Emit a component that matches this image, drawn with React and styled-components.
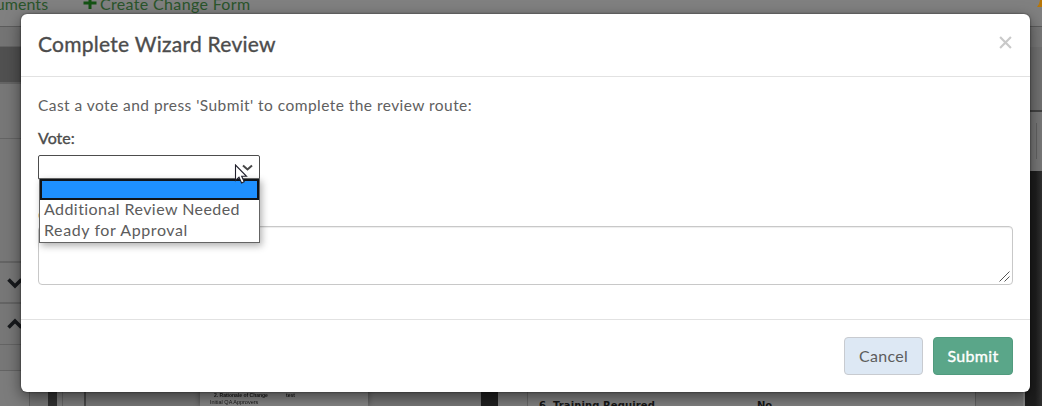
import React from "react";
import styled, { createGlobalStyle } from "styled-components";

const Global = createGlobalStyle`
  * { box-sizing: border-box; }
  body { margin: 0; overflow: hidden; font-family: Lato, "Liberation Sans", sans-serif; font-size: 16px; color: #55585b; }
`;

const Screen = styled.div`
  position: relative;
  width: 1042px;
  height: 406px;
  overflow: hidden;
  background: #757575;
  display: flex;
  flex-direction: column;
`;
const TopBar = styled.div`
  height: 27px;
  flex: none;
  background: #808080;
  border-bottom: 1px solid #5c5c5c;
  box-shadow: 0 1px 3px rgba(0, 0, 0, 0.2);
  color: #2a552b;
  display: flex;
  justify-content: space-between;
  align-items: flex-start;
`;
const Links = styled.div`
  display: flex;
  align-items: flex-start;
  height: 20px;
  line-height: 20px;
  margin-top: -6px;
  white-space: nowrap;
`;
const CutLink = styled.div`
  width: 83px;
  display: flex;
  span { margin-left: -12px; letter-spacing: 0.07px; }
`;
const CreateLink = styled.div`
  display: flex;
  align-items: flex-start;
  gap: 3px;
  letter-spacing: 0.34px;
  svg { margin-top: 2px; }
`;
const Workspace = styled.div`
  flex: 1;
  display: flex;
`;
const Sidebar = styled.div`
  width: 48px;
  display: flex;
  flex-direction: column;
`;
const SideRow = styled.div`
  height: ${(p) => p.$h}px;
  flex: none;
  background: ${(p) => p.$bg || "#777"};
  border-bottom: ${(p) => p.$line || 1}px solid #646464;
  display: flex;
  align-items: center;
  padding-left: 7px;
`;
const SideEnd = styled.div`
  flex: 1;
  width: 30px;
  background: #7c7c7c;
  border-right: 1px solid #606060;
`;
const Strip = styled.div`
  width: ${(p) => p.$w}px;
  flex: none;
  background: ${(p) => p.$bg};
`;
const Preview = styled.div`
  width: 395px;
  background: #777;
  display: flex;
  align-items: flex-end;
  padding-left: 114px;
`;
const Thumb = styled.div`
  width: 168px;
  height: 30px;
  background: #858585;
  box-shadow: 0 0 6px rgba(0, 0, 0, 0.4);
  color: #161616;
  font: 5.5px/7px "Liberation Sans", sans-serif;
  padding: 16px 10px 0;
  filter: blur(0.35px);
`;
const ThumbLine = styled.div`
  display: flex;
  font-weight: bold;
  font-size: 5px;
  padding-left: 4px;
  white-space: nowrap;
  span { width: 72px; }
`;
const DocPage = styled.div`
  flex: 1;
  background: #808080;
  border-left: 1px solid #676767;
  display: flex;
  align-items: flex-end;
`;
const DocLine = styled.div`
  height: 6px;
  display: flex;
  font: bold 10px/12px "DejaVu Sans", sans-serif;
  color: #151515;
  padding-left: 11px;
  white-space: nowrap;
  span:first-child { width: 14px; }
  span:nth-child(2) { width: 204px; letter-spacing: 0.1px; }
`;
const RightRail = styled.div`
  width: 36px;
  display: flex;
  flex-direction: column;
`;
const RailBlock = styled.div`
  height: ${(p) => p.$h}px;
  background: ${(p) => p.$bg};
  border-bottom: ${(p) => p.$line}px solid #434343;
`;
const RailTools = styled.div`
  height: 59px;
  background: #787878;
  padding: 11px 5px 12px 30px;
  display: flex;
  div { width: 1px; background: #626262; }
`;
const RailDark = styled.div`
  flex: 1;
  display: flex;
  background: #777;
  padding-left: 17px;
  div { flex: 1; background: linear-gradient(90deg, #1d1d1d 60%, #303030); border-left: 2px solid #858585; }
`;

const Modal = styled.div`
  position: absolute;
  left: 21px;
  top: 14px;
  width: 1009px;
  height: 378px;
  background: #fff;
  border-radius: 6px;
  box-shadow: 0 5px 15px rgba(0, 0, 0, 0.5), 0 0 2px rgba(0, 0, 0, 0.65);
  display: flex;
  flex-direction: column;
`;
const Header = styled.div`
  height: 63px;
  flex: none;
  border-bottom: 1px solid #e2e2e2;
  display: flex;
  justify-content: space-between;
  align-items: center;
  padding: 0 18px 0 17px;
`;
const Title = styled.div`
  font-size: 21px;
  line-height: 24px;
  margin-bottom: 2px;
  letter-spacing: 0.26px;
  color: #4c4c4c;
  -webkit-text-stroke: 0.35px #4c4c4c;
`;
const Body = styled.div`
  flex: 1;
  padding: 17px 17px 0;
`;
const Intro = styled.div`
  font-size: 15.5px;
  line-height: 22px;
  letter-spacing: 0.45px;
  color: #606060;
`;
const Label = styled.div`
  margin-top: 11px;
  line-height: 22px;
  font-size: 16px;
  color: #4c4c4c;
  -webkit-text-stroke: 0.35px #4c4c4c;
`;
const Field = styled.div`
  position: relative;
  margin-top: 6px;
  width: 222px;
  height: 49px;
`;
const Select = styled.div`
  height: 25px;
  border: 1px solid #4d4d4d;
  border-radius: 2px;
  background: #fff;
  display: flex;
  justify-content: flex-end;
  padding: 8px 6px 0;
`;
const Menu = styled.div`
  position: absolute;
  left: 1px;
  top: 23px;
  width: 221px;
  height: 65px;
  background: #fff;
  border: 1px solid #646464;
  box-shadow: 2px 3px 7px rgba(0, 0, 0, 0.3);
  z-index: 2;
`;
const Option = styled.div`
  height: 21px;
  line-height: 18px;
  padding-left: 4px;
  letter-spacing: ${(p) => p.$ls || 0}px;
  white-space: nowrap;
  color: #5c5c5c;
`;
const Selected = styled.div`
  height: 21px;
  background: #1e90ff;
  border: 2px solid #101419;
`;
const Pointer = styled.svg`
  position: absolute;
  left: 196px;
  top: 9px;
  z-index: 3;
`;
const CommentLabel = styled.div`
  height: 22px;
  line-height: 22px;
  color: #4c4c4c;
`;
const Comment = styled.div`
  height: 59px;
  border: 1px solid #c8c8c8;
  border-radius: 4px;
  box-shadow: inset 0 1px 1px rgba(0, 0, 0, 0.075);
  display: flex;
  justify-content: flex-end;
  align-items: flex-end;
  padding: 2px;
`;
const Footer = styled.div`
  height: 73px;
  flex: none;
  border-top: 1px solid #e2e2e2;
  display: flex;
  justify-content: flex-end;
  gap: 10px;
  padding: 17px 17px 0;
`;
const Button = styled.button`
  width: ${(p) => (p.$primary ? 80 : 79)}px;
  height: 38px;
  padding: 0;
  border-radius: 4px;
  font: 16px/22px Lato, sans-serif;
  letter-spacing: ${(p) => (p.$primary ? 0.3 : 0.3)}px;
  color: ${(p) => (p.$primary ? "#fff" : "#5c5c5c")};
  background: ${(p) => (p.$primary ? "#5aa689" : "#dde8f4")};
  border: 1px solid ${(p) => (p.$primary ? "#519b7e" : "#c8cbd0")};
  -webkit-text-stroke: ${(p) => (p.$primary ? "0.35px #fff" : "0")};
`;

const Chevron = ({ up }) => (
  <svg width="17" height="12" viewBox="0 0 17 12">
    <path d={up ? "M1.5 9.5L8 3L14.5 9.5" : "M1.5 2.5L8 9L14.5 2.5"} fill="none" stroke="#17191c" strokeWidth="3.6" />
  </svg>
);

export default function App() {
  return (
    <Screen>
      <Global />
      <TopBar>
        <Links>
          <CutLink><span>cuments</span></CutLink>
          <CreateLink>
            <svg width="14" height="14" viewBox="0 0 14 14"><path d="M7 1v12M0.5 7h13" stroke="#145214" strokeWidth="3" /></svg>
            <span>Create Change Form</span>
          </CreateLink>
        </Links>
        <svg width="5" height="8" viewBox="0 0 5 8"><path d="M5 0H3L2 4L0 7H5Z" fill="#b87708" /></svg>
      </TopBar>
      <Workspace>
        <Sidebar>
          <SideRow $h={20} $bg="#747474" $line={0} />
          <SideRow $h={37} $bg="#505050" $line={2} />
          <SideRow $h={55} />
          <SideRow $h={124} $line={2} />
          <SideRow $h={41} $line={2}><Chevron /></SideRow>
          <SideRow $h={41}><Chevron up /></SideRow>
          <SideRow $h={26} />
          <SideEnd />
        </Sidebar>
        <Strip $w={9} $bg="#303030" />
        <Strip $w={5} $bg="#7b7b7b" />
        <Strip $w={1} $bg="#656565" />
        <Strip $w={21} $bg="#7b7b7b" />
        <Strip $w={2} $bg="#484848" />
        <Preview>
          <Thumb>
            <ThumbLine><span>2. Rationale of Change</span>test</ThumbLine>
            <div>Initial QA Approvers</div>
          </Thumb>
        </Preview>
        <Strip $w={17} $bg="#202020" />
        <Strip $w={29} $bg="#7d7d7d" />
        <DocPage>
          <DocLine><span>6.</span><span>Training Required</span><span>No</span></DocLine>
        </DocPage>
        <Strip $w={1} $bg="#606060" />
        <Strip $w={30} $bg="#777" />
        <RightRail>
          <RailBlock $h={20} $bg="#787878" $line={0} />
          <RailBlock $h={65} $bg="#717171" $line={2} />
          <RailTools><div /></RailTools>
          <RailDark><div /></RailDark>
        </RightRail>
      </Workspace>

      <Modal>
        <Header>
          <Title>Complete Wizard Review</Title>
          <svg width="13" height="13" viewBox="0 0 12 12" style={{ marginBottom: 6 }}>
            <path d="M1 1L11 11M11 1L1 11" stroke="#c9c9c9" strokeWidth="2" />
          </svg>
        </Header>
        <Body>
          <Intro>Cast a vote and press 'Submit' to complete the review route:</Intro>
          <Label>Vote:</Label>
          <Field>
            <Select>
              <svg width="11" height="8" viewBox="0 0 11 8"><path d="M1 1.5L5.5 5.5L10 1.5" fill="none" stroke="#484848" strokeWidth="2" /></svg>
            </Select>
            <Menu>
              <Selected />
              <Option $ls={0.43}>Additional Review Needed</Option>
              <Option $ls={0.6}>Ready for Approval</Option>
            </Menu>
            <Pointer width="15" height="21" viewBox="0 0 15 21">
              <path d="M1.5 1V16.5L5 13.2L7.6 19L10.2 17.8L7.7 12.3H12.5Z" fill="#fff" stroke="#20202c" strokeWidth="1.1" />
            </Pointer>
          </Field>
          <CommentLabel>Comments:</CommentLabel>
          <Comment>
            <svg width="11" height="11" viewBox="0 0 11 11"><path d="M0.5 10.5L10.5 0.5M5.5 10.5L10.5 5.5" stroke="#555" strokeWidth="1" /></svg>
          </Comment>
        </Body>
        <Footer>
          <Button>Cancel</Button>
          <Button $primary>Submit</Button>
        </Footer>
      </Modal>
    </Screen>
  );
}
